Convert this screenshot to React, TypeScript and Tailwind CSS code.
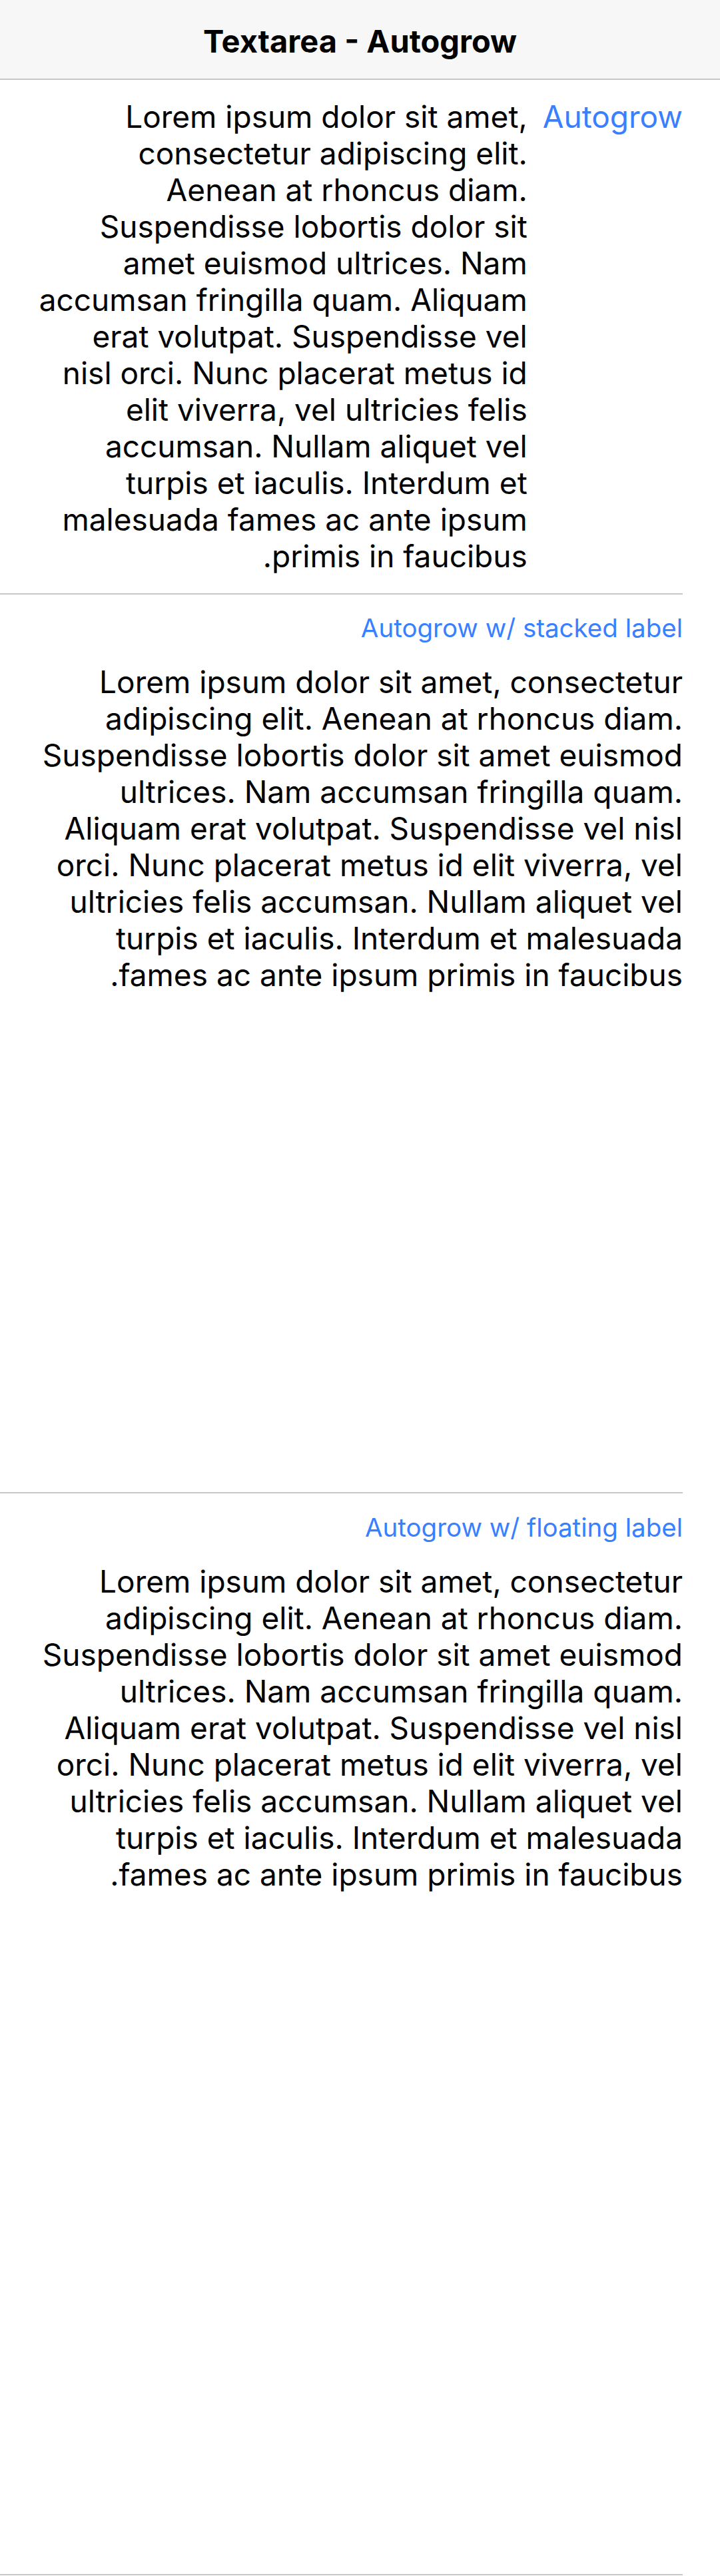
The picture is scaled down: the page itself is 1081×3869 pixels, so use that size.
import React from "react";

const LOREM_HEAD =
  "Lorem ipsum dolor sit amet, consectetur adipiscing elit. Aenean at rhoncus diam. Suspendisse lobortis dolor sit amet euismod ultrices. Nam accumsan fringilla quam. Aliquam erat volutpat. Suspendisse vel ";
const LOREM_TAIL =
  " Nunc placerat metus id elit viverra, vel ultricies felis accumsan. Nullam aliquet vel turpis et iaculis. Interdum et malesuada fames ac ante ipsum primis in faucibus.";
const LOREM = LOREM_HEAD + "nisl orci." + LOREM_TAIL;
// the narrow inline item keeps "nisl orci." together on one line
const LOREM_NARROW = LOREM_HEAD + "nisl\u00A0orci." + LOREM_TAIL;

// stacked / floating items share the same shape, only the body height differs
const LabelledItem = ({
  label,
  top,
  bodyClass,
}: {
  label: string;
  top: string;
  bodyClass: string;
}) => (
  <div className="pr-[56px]">
    <div className={`border-b-2 border-[#c8c7cc] pl-[47px] ${top}`}>
      <label className="block text-[38.5px] leading-[46px] text-[#3880ff]">
        {label}
      </label>
      <div className={`mt-[31px] text-[46px] leading-[55px] ${bodyClass}`}>
        {LOREM}
      </div>
    </div>
  </div>
);

export default function App() {
  return (
    <div
      dir="rtl"
      className="min-h-[3869px] bg-white text-black font-['Inter','Noto_Sans',sans-serif]"
    >
      {/* Toolbar */}
      <header className="h-[120px] bg-[#f7f7f7] border-b-2 border-[#c6c6c6] flex items-center justify-center">
        <h1 className="text-[47px] font-bold leading-none pt-[4px]">
          Textarea - Autogrow
        </h1>
      </header>

      {/* Inline label */}
      <div className="pr-[56px]">
        <div className="flex gap-[23px] border-b-2 border-[#c8c7cc] pt-[28px] pb-[28px] pl-[41px]">
          <label className="shrink-0 text-[46px] leading-[55px] text-[#3880ff]">
            Autogrow
          </label>
          <div className="flex-1 text-[46px] leading-[55px]">{LOREM_NARROW}</div>
        </div>
      </div>

      <LabelledItem
        label="Autogrow w/ stacked label"
        top="pt-[27px]"
        bodyClass="h-[1244px]"
      />

      <LabelledItem
        label="Autogrow w/ floating label"
        top="pt-[28px]"
        bodyClass="h-[1518px]"
      />
    </div>
  );
}
